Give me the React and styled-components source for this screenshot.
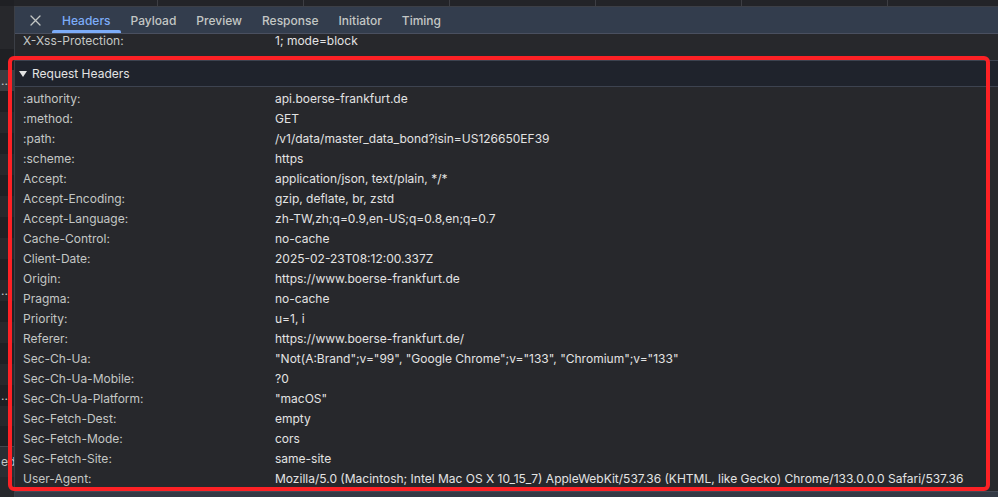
import React from 'react';
import styled, { createGlobalStyle } from 'styled-components';

const GlobalStyle = createGlobalStyle`
  html, body {
    margin: 0;
    padding: 0;
    background: #27282c;
    overflow: hidden;
  }
  body {
    font-family: Inter, "Liberation Sans", sans-serif;
    font-size: 12px;
    color: #e3e3e3;
  }
`;

const headers = [
  [':authority', 'api.boerse-frankfurt.de'],
  [':method', 'GET'],
  [':path', '/v1/data/master_data_bond?isin=US126650EF39'],
  [':scheme', 'https'],
  ['Accept', 'application/json, text/plain, */*'],
  ['Accept-Encoding', 'gzip, deflate, br, zstd'],
  ['Accept-Language', 'zh-TW,zh;q=0.9,en-US;q=0.8,en;q=0.7'],
  ['Cache-Control', 'no-cache'],
  ['Client-Date', '2025-02-23T08:12:00.337Z'],
  ['Origin', 'https://www.boerse-frankfurt.de'],
  ['Pragma', 'no-cache'],
  ['Priority', 'u=1, i'],
  ['Referer', 'https://www.boerse-frankfurt.de/'],
  ['Sec-Ch-Ua', '"Not(A:Brand";v="99", "Google Chrome";v="133", "Chromium";v="133"'],
  ['Sec-Ch-Ua-Mobile', '?0'],
  ['Sec-Ch-Ua-Platform', '"macOS"'],
  ['Sec-Fetch-Dest', 'empty'],
  ['Sec-Fetch-Mode', 'cors'],
  ['Sec-Fetch-Site', 'same-site'],
  ['User-Agent', 'Mozilla/5.0 (Macintosh; Intel Mac OS X 10_15_7) AppleWebKit/537.36 (KHTML, like Gecko) Chrome/133.0.0.0 Safari/537.36'],
];

const tabs = ['Headers', 'Payload', 'Preview', 'Response', 'Initiator', 'Timing'];

// left strip = the request list behind the details pane
const listRows = [
  { tone: 'dark', h: 6 },
  { tone: 'mid', h: 22 },
  { tone: 'mid', h: 21 },
  { tone: 'dark', h: 21 },
  { tone: 'sel', h: 21, text: '..' },
  { tone: 'dark', h: 21 },
  { tone: 'mid', h: 21 },
  { tone: 'dark', h: 21 },
  { tone: 'mid', h: 21 },
  { tone: 'dark', h: 21 },
  { tone: 'mid', h: 21 },
  { tone: 'dark', h: 21 },
  { tone: 'mid', h: 21 },
  { tone: 'dark', h: 21 },
  { tone: 'mid', h: 21, text: '..' },
  { tone: 'dark', h: 21 },
  { tone: 'mid', h: 21 },
  { tone: 'dark', h: 21 },
  { tone: 'mid', h: 21 },
  { tone: 'dark', h: 21, text: '..' },
  { tone: 'mid', h: 20 },
  { tone: 'dark', h: 20 },
  { tone: 'foot', h: 30, text: 'ed' },
];

const toneColors = {
  dark: '#1f2024',
  mid: '#27282c',
  sel: '#3b3c41',
  foot: '#2c2e33',
};

const Page = styled.div`
  position: relative;
  width: 998px;
  height: 497px;
  display: flex;
  flex-direction: column;
  background: #27282c;
`;

const ColumnStrip = styled.div`
  height: 6px;
  display: flex;
  background: #232428;
  border-bottom: 1px solid #3c3f46;
  padding-left: 11px;
`;

const ColumnCell = styled.div`
  width: 145px;
  flex-shrink: 0;
  border-left: 1px solid #3d3e43;
`;

const Body = styled.div`
  flex: 1;
  display: flex;
  min-height: 0;
`;

const RequestList = styled.div`
  width: 14px;
  flex-shrink: 0;
  display: flex;
  flex-direction: column;
  overflow: hidden;
  margin-top: -7px;
`;

const ListRow = styled.div`
  height: ${p => p.$h}px;
  flex-shrink: 0;
  background: ${p => toneColors[p.$tone]};
  color: #c4c7c5;
  font-size: 12px;
  line-height: ${p => p.$h}px;
  padding-left: 1px;
  white-space: nowrap;
  overflow: hidden;
  border-top: ${p => (p.$tone === 'foot' ? '1px solid #43464d' : 'none')};
`;

const Details = styled.div`
  flex: 1;
  display: flex;
  flex-direction: column;
  border-left: 1px solid #3c3f46;
  min-width: 0;
`;

const TabBar = styled.div`
  height: 26px;
  flex-shrink: 0;
  display: flex;
  align-items: stretch;
  background: #333d4d;
  border-bottom: 1px solid #4a5060;
`;

const CloseButton = styled.div`
  width: 30px;
  margin-left: 5px;
  display: flex;
  align-items: center;
  justify-content: center;
  color: #c4c7c5;
`;

const Tab = styled.div`
  position: relative;
  display: flex;
  align-items: center;
  padding: 0 10px;
  margin-left: ${p => (p.$first ? '2px' : '0')};
  font-size: 12px;
  font-weight: 500;
  color: ${p => (p.$active ? '#7cacf8' : '#c4c7c5')};

  &::after {
    content: '';
    display: ${p => (p.$active ? 'block' : 'none')};
    position: absolute;
    left: 0;
    right: 0;
    bottom: 0;
    height: 3px;
    border-radius: 2px 2px 0 0;
    background: #7cacf8;
  }
`;

const Scroller = styled.div`
  flex: 1;
  overflow: hidden;
`;

const Row = styled.div`
  display: flex;
  height: ${p => p.$h || 20}px;
  line-height: ${p => p.$lh || 20}px;
  padding-left: 8px;
  white-space: nowrap;
`;

const Name = styled.div`
  width: 252px;
  flex-shrink: 0;
  color: #c4c7c5;
`;

const Value = styled.div`
  color: #e3e3e3;
`;

const SectionHeader = styled.div`
  height: 25px;
  display: flex;
  align-items: center;
  gap: 5px;
  padding-left: 4px;
  background: #1f232c;
  border-top: 1px solid #3d4350;
  border-bottom: 1px solid #3d4350;
  color: #e3e3e3;
  font-size: 12px;
`;

const Triangle = styled.span`
  width: 0;
  height: 0;
  border-left: 4px solid transparent;
  border-right: 4px solid transparent;
  border-top: 6px solid #e3e3e3;
  margin-top: 1px;
`;

const HeaderList = styled.div`
  padding-top: 2px;
`;

const BottomBar = styled.div`
  height: 5px;
  flex-shrink: 0;
  background: #343a45;
  border-top: 1px solid #454a55;
`;

const Highlight = styled.div`
  position: absolute;
  left: 8px;
  top: 56px;
  width: 982px;
  height: 435px;
  box-sizing: border-box;
  border: 4px solid #fc2125;
  border-radius: 6px;
  pointer-events: none;
`;

const CloseIcon = () => (
  <svg width="11" height="11" viewBox="0 0 11 11" fill="none">
    <path d="M1 1L10 10M10 1L1 10" stroke="currentColor" strokeWidth="1.3" strokeLinecap="round" />
  </svg>
);

export default function App() {
  return (
    <Page>
      <GlobalStyle />
      <ColumnStrip>
        {Array.from({ length: 7 }).map((_, i) => (
          <ColumnCell key={i} />
        ))}
      </ColumnStrip>
      <Body>
        <RequestList>
          {listRows.map((r, i) => (
            <ListRow key={i} $h={r.h} $tone={r.tone}>
              {r.text}
            </ListRow>
          ))}
        </RequestList>
        <Details>
          <TabBar>
            <CloseButton>
              <CloseIcon />
            </CloseButton>
            {tabs.map((t, i) => (
              <Tab key={t} $active={i === 0} $first={i === 0}>
                {t}
              </Tab>
            ))}
          </TabBar>
          <Scroller>
            <Row $h={26} $lh={13}>
              <Name>X-Xss-Protection:</Name>
              <Value>1; mode=block</Value>
            </Row>
            <SectionHeader>
              <Triangle />
              Request Headers
            </SectionHeader>
            <HeaderList>
              {headers.map(([k, v]) => (
                <Row key={k}>
                  <Name>{k}:</Name>
                  <Value>{v}</Value>
                </Row>
              ))}
            </HeaderList>
          </Scroller>
          <BottomBar />
        </Details>
      </Body>
      <Highlight />
    </Page>
  );
}
